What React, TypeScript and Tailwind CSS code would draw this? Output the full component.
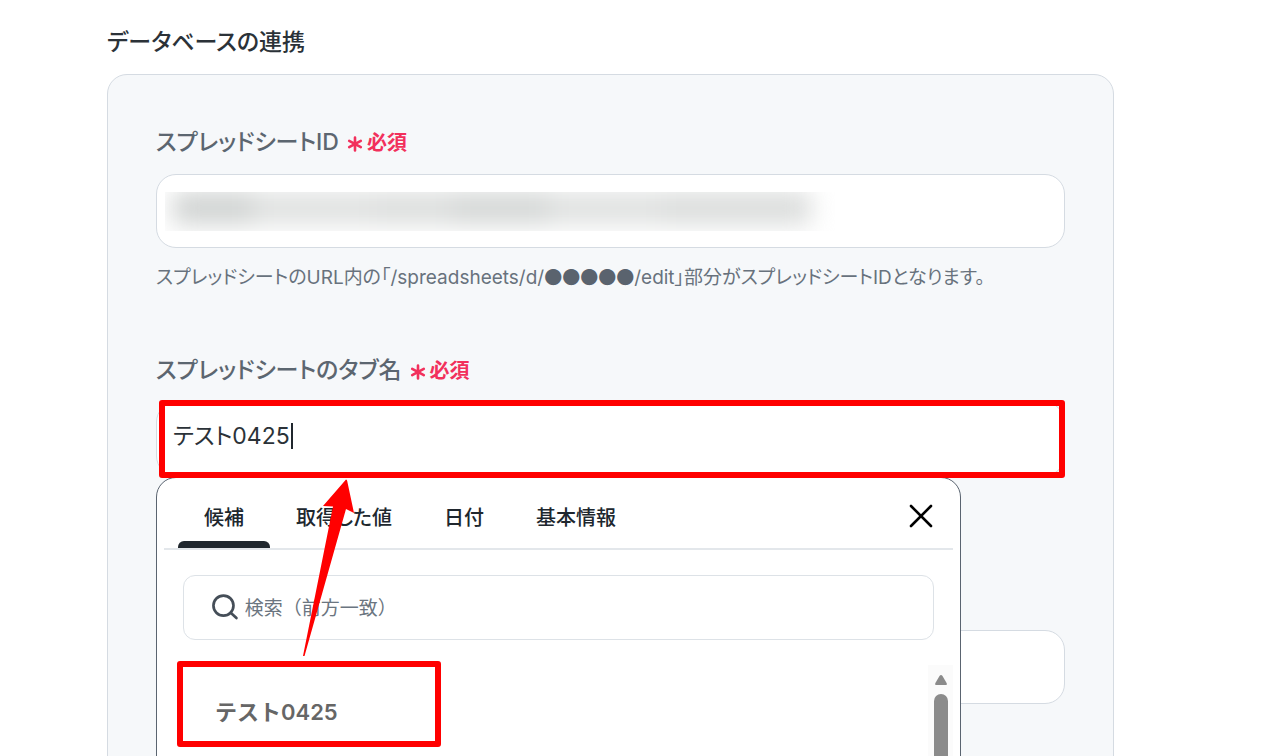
import { useState, type ReactNode } from 'react';

const inputClass =
  'block h-[74px] w-full rounded-[20px] border border-[#d5dbe2] bg-white px-4 text-[23px] text-[#2b3238] outline-none';

function RequiredMark() {
  return (
    <span className="flex items-center gap-1 pt-[2px] text-[20px] leading-8 font-semibold text-[#f2305c]">
      <svg viewBox="0 0 16 16" className="mt-[2px] size-4" stroke="currentColor" strokeWidth="2.6" strokeLinecap="round" aria-hidden="true">
        <path d="M8 1.5v13M2.2 4.9l11.6 6.2M13.8 4.9L2.2 11.1" />
      </svg>
      必須
    </span>
  );
}

function FieldLabel({ id, children }: { id: string; children: ReactNode }) {
  return (
    <label htmlFor={id} className="flex h-8 items-center gap-2 text-[23px] leading-8 font-medium text-[#5c6670]">
      {children}
      <RequiredMark />
    </label>
  );
}

const tabs = ['候補', '取得した値', '日付', '基本情報'];

function SuggestionPopup() {
  const [active, setActive] = useState(0);
  return (
    <div className="absolute top-[75px] left-0 z-10 h-[480px] w-[805px] max-w-full rounded-[20px] border border-[#5a6470] bg-white">
      <div className="mx-[7px] flex h-[72px] items-stretch border-b-2 border-[#e3e7eb] pl-[14px]">
        <div role="tablist" className="flex">
          {tabs.map((tab, i) => (
            <button
              key={tab}
              role="tab"
              aria-selected={i === active}
              onClick={() => setActive(i)}
              className="relative px-[26px] pt-[10px] pb-[1px] text-[20px] font-medium text-[#20272e]"
            >
              {tab}
              {i === active && <span className="absolute inset-x-0 bottom-0 h-[7px] rounded-t-md bg-[#20272e]" />}
            </button>
          ))}
        </div>
        <button aria-label="閉じる" className="mt-[6px] mr-5 ml-auto self-center">
          <svg viewBox="0 0 24 24" className="size-6" stroke="#000" strokeWidth="2.6" strokeLinecap="round" aria-hidden="true">
            <path d="M2 2l20 20M22 2L2 22" />
          </svg>
        </button>
      </div>
      <div className="mx-[26px] mt-[25px] flex h-[65px] items-center gap-[6px] rounded-xl border border-[#dde2e7] pl-7">
        <svg viewBox="0 0 28 28" className="size-7" fill="none" stroke="#454e58" strokeWidth="2.8" strokeLinecap="round" aria-hidden="true">
          <circle cx="12" cy="11.500" r="10.500" />
          <path d="M19.6 18.900l6 5.600" />
        </svg>
        <input
          aria-label="検索"
          placeholder="検索（前方一致）"
          className="h-10 w-full bg-transparent pt-[2px] text-[19px] text-[#252c33] outline-none [font-feature-settings:normal] placeholder:text-[#6b7580]"
        />
      </div>
      <div className="mt-[21px] flex">
        <div className="relative flex-1">
          <div className="absolute left-5 h-[86px] w-[264px] rounded-[3px] border-[6px] border-[#ff0000]" />
          <button className="ml-[58px] h-[103px] text-[22px] font-semibold text-[#666] [font-feature-settings:normal]">
            テスト0425
          </button>
        </div>
        <div className="mt-1 mr-[7px] flex w-[25px] flex-col items-center gap-[9px] bg-[#fbfbfb] pt-[10px]">
          <svg viewBox="0 0 12 10" className="h-[10px] w-3" fill="#8b8b8b" aria-hidden="true">
            <path d="M6 0Q6.8 0 7.5 1L11.6 8Q12.4 10 11 10H1Q-.4 10 .4 8L4.500 1Q5.200 0 6 0Z" />
          </svg>
          <div className="h-[120px] w-[14px] rounded-full bg-[#8b8b8b]" />
        </div>
      </div>
    </div>
  );
}

export default function App() {
  const [tabName, setTabName] = useState('テスト0425');
  return (
    <main
      lang="ja"
      className="h-screen overflow-hidden bg-white pr-[170px] pl-[107px] font-['Inter','Noto_Sans_CJK_JP',sans-serif] [font-feature-settings:'palt']"
    >
      <h1 className="pt-[26px] text-[23px] leading-8 font-medium text-[#2b3238]">データベースの連携</h1>
      <section className="mt-4 h-[900px] rounded-[20px] border border-[#d5dbe2] bg-[#f6f8fa] px-12 pt-[51px]">
        <FieldLabel id="sheet-id">スプレッドシートID</FieldLabel>
        <div className="relative mt-4">
          <input id="sheet-id" className={inputClass} />
          <div className="absolute top-[18px] left-[9px] h-[39px] w-[670px] overflow-hidden bg-white">
            <div className="mr-6 ml-2 flex h-8 bg-[#dfe1e0] blur-[12px]">
              <span className="w-20 bg-[#cfd2d1]" />
              <span className="ml-[120px] w-20 bg-[#dbdddc]" />
              <span className="w-24 bg-[#d3d6d5]" />
              <span className="ml-28 w-[150px] bg-[#dadcdb]" />
            </div>
          </div>
        </div>
        <p className="mt-4 h-6 text-[19px] leading-6 text-[#68727d]">
          スプレッドシートのURL内の「/spreadsheets/d/
          <span className="font-['Noto_Sans_CJK_JP',sans-serif] text-[18px] text-[#5a636e]">●●●●●</span>
          /edit」部分がスプレッドシートIDとなります。
        </p>

        <div className="mt-[66px]">
          <FieldLabel id="tab-name">スプレッドシートのタブ名</FieldLabel>
          <div className="relative mt-4">
            <input
              id="tab-name"
              value={tabName}
              onChange={(e) => setTabName(e.target.value)}
              className={`${inputClass} pb-[10px]`}
            />
            <span className="absolute top-[21px] left-[135px] h-[26px] w-[2px] bg-[#20272e]" />
            <SuggestionPopup />
            <div className="pointer-events-none absolute -top-[2px] right-0 -bottom-[2px] left-[3px] z-20 rounded-[3px] border-[6px] border-[#ff0000]" />
            <svg viewBox="0 0 56 180" className="pointer-events-none absolute top-[76px] left-[144px] z-20 h-[180px] w-14" fill="#ff0000" aria-hidden="true">
              <path d="M46 1.500Q47 1.500 47.200 3L54 35L46 31L4.500 178H3L33 28.500L23 28Z" />
            </svg>
          </div>
        </div>

        <div className="pt-[154px]">
          <input aria-label="シートの項目" className={inputClass} />
        </div>
      </section>
    </main>
  );
}
